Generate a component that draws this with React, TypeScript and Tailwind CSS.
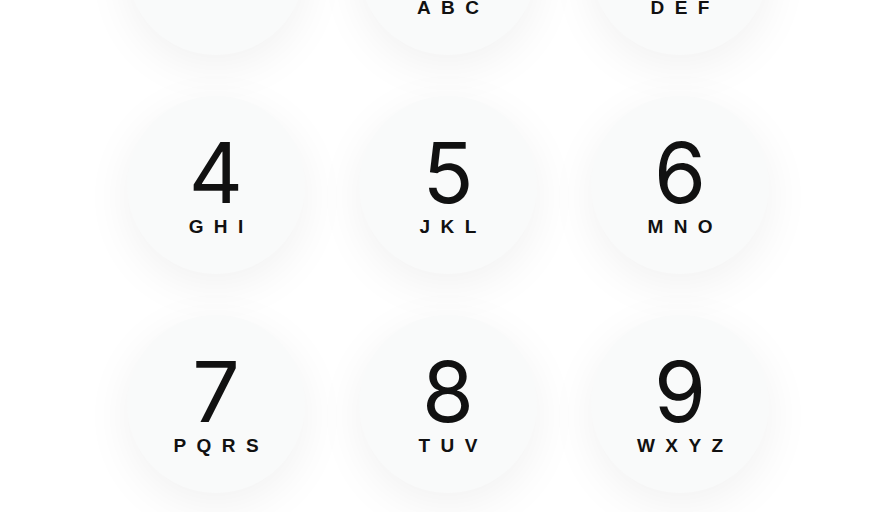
import React from 'react';

const keys = [
  { digit: '1', letters: '' },
  { digit: '2', letters: 'ABC' },
  { digit: '3', letters: 'DEF' },
  { digit: '4', letters: 'GHI' },
  { digit: '5', letters: 'JKL' },
  { digit: '6', letters: 'MNO' },
  { digit: '7', letters: 'PQRS' },
  { digit: '8', letters: 'TUV' },
  { digit: '9', letters: 'WXYZ' },
];

const Key = ({ digit, letters }: { digit: string; letters: string }) => (
  <button className="w-[178px] h-[178px] rounded-full bg-[#f9fafa] shadow-[0_12px_48px_rgba(0,0,0,0.06)] flex flex-col items-center justify-center text-[#111]">
    <span className="text-[84px] leading-[72px] font-normal mt-[2px]">{digit}</span>
    <span className="text-[19px] leading-[19px] font-bold tracking-[0.55em] pl-[0.55em] mt-[8px] font-['Liberation_Sans',sans-serif]">
      {letters}
    </span>
  </button>
);

const App = () => {
  return (
    <div
      className="w-[896px] h-[512px] overflow-hidden bg-white flex justify-center"
      style={{ fontFamily: 'Inter, "Liberation Sans", sans-serif' }}
    >
      <div className="grid grid-cols-3 gap-x-[54px] gap-y-[41px] mt-[-123px] h-fit">
        {keys.map((k) => (
          <Key key={k.digit} digit={k.digit} letters={k.letters} />
        ))}
      </div>
    </div>
  );
};

export default App;
